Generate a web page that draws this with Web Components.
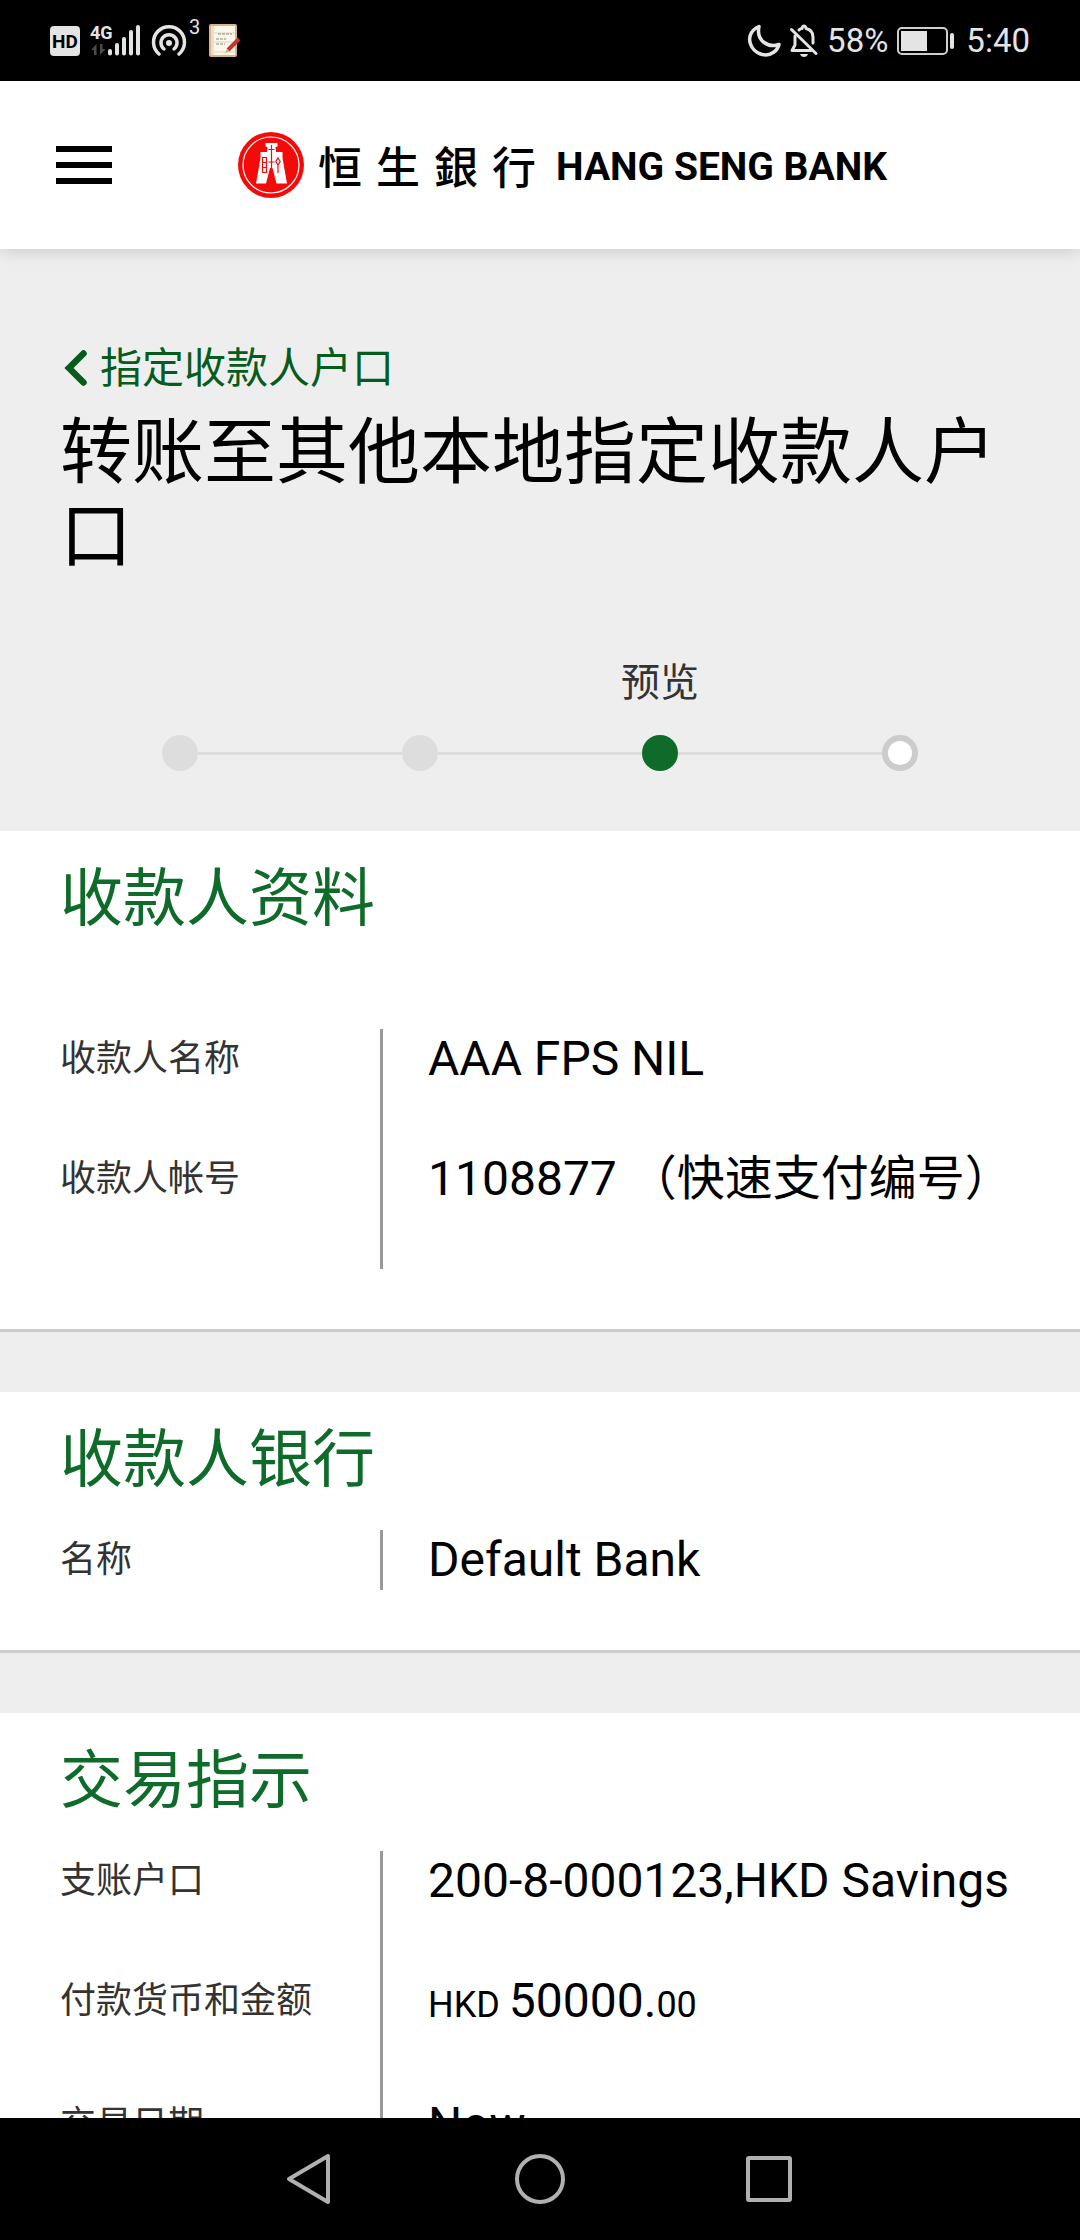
<!DOCTYPE html>
<html lang="zh-CN">
<head>
<meta charset="utf-8">
<meta name="viewport" content="width=device-width, initial-scale=1">
<title>恒生銀行 HANG SENG BANK</title>
<style>
  html, body { margin: 0; height: 100%; }
  body {
    font-family: Roboto, "Noto Sans CJK SC", sans-serif;
    color: #000;
    background: #000;
    --green: #0f6b29;
    --green-dark: #055c1d;
    --surface: #eee;
    --text-soft: #333;
    --gutter: 60px;
  }
</style>
</head>
<body>
<app-screen>
  <status-bar slot="status"></status-bar>
  <bank-header slot="header"></bank-header>
  <page-hero>
    <span slot="back">指定收款人户口</span>
    <span slot="title">转账至其他本地指定收款人户口</span>
    <step-tracker slot="steps">
      <step-item state="done"></step-item>
      <step-item state="done"></step-item>
      <step-item state="current">预览</step-item>
      <step-item state="end"></step-item>
    </step-tracker>
  </page-hero>
  <info-card spaced>
    <span slot="heading">收款人资料</span>
    <detail-row><span slot="label">收款人名称</span>AAA FPS NIL</detail-row>
    <detail-row><span slot="label">收款人帐号</span>1108877 （快速支付编号）</detail-row>
  </info-card>
  <info-card>
    <span slot="heading">收款人银行</span>
    <detail-row last><span slot="label">名称</span>Default Bank</detail-row>
  </info-card>
  <info-card>
    <span slot="heading">交易指示</span>
    <detail-row><span slot="label">支账户口</span>200-8-000123,HKD Savings</detail-row>
    <detail-row><span slot="label">付款货币和金额</span><money-amount currency="HKD" whole="50000" cents="00"></money-amount></detail-row>
    <detail-row><span slot="label">交易日期</span>Now</detail-row>
  </info-card>
  <system-nav slot="nav"></system-nav>
</app-screen>

<script>
  const define = (name, html, setup) => {
    const template = document.createElement('template');
    template.innerHTML = html;
    customElements.define(name, class extends HTMLElement {
      constructor() {
        super();
        this.attachShadow({ mode: 'open' }).append(template.content.cloneNode(true));
      }
      connectedCallback() {
        if (setup) setup(this, this.shadowRoot);
      }
    });
  };

  define('app-screen', `
    <style>
      :host { display: flex; flex-direction: column; height: 100vh; }
      main { flex: 1; min-height: 0; overflow: hidden; background: var(--surface); }
    </style>
    <slot name="status"></slot>
    <slot name="header"></slot>
    <main><slot></slot></main>
    <slot name="nav"></slot>
  `);

  define('status-bar', `
    <style>
      :host {
        display: flex; justify-content: space-between; align-items: center;
        height: 81px; padding: 0 50px; background: #000; color: #e4e4e4;
        font-size: 33px; line-height: 40px;
      }
      .group { display: flex; align-items: center; gap: 9px; }
      svg { display: block; flex: none; overflow: visible; }
      text { font-family: Roboto, sans-serif; }
    </style>
    <div class="group">
      <svg width="30" height="38" viewBox="0 0 30 38">
        <rect y="4" width="30" height="30" rx="4" fill="#e4e4e4"/>
        <text x="15" y="26" font-size="19" font-weight="700" text-anchor="middle" fill="#000">HD</text>
      </svg>
      <svg width="52" height="46" viewBox="0 0 52 46">
        <text x="1" y="21" font-size="18" font-weight="700" fill="#e4e4e4">4G</text>
        <path d="M2 32l5.500-6v11H5v-5zM16.500 31l-5.500 6V26h2.500v5z" fill="#4a4a4a"/>
        <path d="M21 33v2.500M28 27v8.500M35 21v14.500M42 14v21.500M49 9v26.500" stroke="#e4e4e4" stroke-width="4" stroke-linecap="round"/>
      </svg>
      <svg width="50" height="50" viewBox="0 0 50 50">
        <circle cx="19" cy="27" r="3" fill="#e4e4e4"/>
        <g fill="none" stroke="#e4e4e4" stroke-width="3.500" stroke-linecap="round">
          <path d="M14 33a8 8 0 1 1 10 0"/>
          <path d="M9 38a15.500 15.500 0 1 1 20 0"/>
        </g>
        <text x="39" y="18" font-size="20" fill="#e4e4e4">3</text>
      </svg>
      <svg width="31" height="36" viewBox="0 0 31 36">
        <rect x="0" y="1" width="28" height="33" rx="2" fill="#d9b57f"/>
        <rect x="2" y="3" width="24" height="29" fill="#fbf7ea"/>
        <path d="M2 3h3v29H2z" fill="#f0d9cf"/>
        <path d="M5 10h21M5 19h21M5 29h21" stroke="#ddd6c4"/>
        <path d="M9 11h14M7 16h10M7 21h9" stroke="#8e8873" stroke-dasharray="3 1"/>
        <path d="M19 27L30 16" stroke="#c5352e" stroke-width="4"/>
        <path d="M20 28.500l-2-2.500-2 4z" fill="#dba872"/>
      </svg>
    </div>
    <div class="group">
      <svg width="34" height="34" viewBox="0 0 34 34">
        <path d="M12 2.500C4 6 1 13 3.500 20C7 30 19 34 27 28C30 26 31 24 32 20.500C21 24 9 17 12 2.500z" fill="none" stroke="#e4e4e4" stroke-width="3.500" stroke-linejoin="round"/>
      </svg>
      <svg width="28" height="34" viewBox="0 0 28 34">
        <g fill="none" stroke="#e4e4e4" stroke-width="3" stroke-linecap="round" stroke-linejoin="round">
          <path d="M1.500 5.500L26 29.500"/>
          <path d="M5 12v9L2 26.500h19"/>
          <path d="M9 6Q11 4 12 4.500Q12.500 2 14 2Q15.500 2 16 4.500Q23 6 23 13v6"/>
        </g>
        <path d="M10 30h8q-1 3-4 3t-4-3z" fill="#e4e4e4"/>
      </svg>
      <span>58%</span>
      <svg width="60" height="28" viewBox="0 0 60 28">
        <rect x="1" y="1" width="49" height="26" rx="4" fill="none" stroke="#cfcfcf" stroke-width="2"/>
        <rect x="4" y="4" width="26" height="20" fill="#e4e4e4"/>
        <rect x="53" y="6" width="4" height="16" rx="2" fill="#e4e4e4"/>
      </svg>
      <span>5:40</span>
    </div>
  `);

  define('bank-header', `
    <style>
      :host {
        display: flex; align-items: center; gap: 126px; height: 168px; padding: 0 56px;
        background: #fff; position: relative; z-index: 1;
        box-shadow: 0 2px 15px rgba(0, 10, 0, .16);
      }
      button {
        display: flex; flex-direction: column; gap: 10px; width: 56px;
        padding: 0; border: 0; background: none;
      }
      button i { height: 6px; background: #000; }
      a { display: flex; align-items: center; color: #000; text-decoration: none; }
      svg { display: block; flex: none; margin-right: 14px; }
      .zh {
        display: flex; justify-content: space-between; width: 218px; margin-right: 20px;
        font: 500 44px/60px "Noto Sans CJK TC", sans-serif;
      }
      .en { padding-top: 4px; font-size: 39px; line-height: 60px; font-weight: 700; white-space: nowrap; }
    </style>
    <button type="button" aria-label="菜单"><i></i><i></i><i></i></button>
    <a href="#">
      <svg width="66" height="66" viewBox="0 0 66 66" aria-hidden="true">
        <circle cx="33" cy="33" r="33" fill="#f50a0a"/>
        <circle cx="33" cy="33" r="28" fill="none" stroke="#fff" stroke-width="1.200"/>
        <path d="M27.500 11h12v3.500l-2 .5.500 5h6.500v6L49 51.500H38.500L34.500 36h-2.500L28 51.500H18L22.500 26v-6H29l.5-5-2-.5z" fill="#fff"/>
        <g fill="none" stroke="#f50a0a" stroke-width="1.200">
          <path d="M33.500 13v24M30.500 17.500h6M30.500 30h6"/>
          <path d="M24.500 25.500h4v15h-4zM24.500 30.500h4M24.500 35.500h4"/>
          <path d="M40 26l2.200 3.500L40 33l-2.200-3.500zM40 33v8"/>
        </g>
      </svg>
      <span class="zh"><span>恒</span><span>生</span><span>銀</span><span>行</span></span>
      <span class="en">HANG SENG BANK</span>
    </a>
  `);

  define('page-hero', `
    <style>
      :host { display: block; padding: 90px var(--gutter) 60px; background: var(--surface); }
      a {
        display: inline-flex; align-items: center; gap: 12px; padding-left: 4px;
        color: var(--green-dark); font-size: 42px; line-height: 60px; text-decoration: none;
      }
      svg { display: block; flex: none; }
      h1 { margin: 12px 0 80px; font-size: 72px; line-height: 84px; font-weight: 400; }
    </style>
    <a href="#">
      <svg width="24" height="38" viewBox="0 0 24 38" aria-hidden="true">
        <path d="M19.500 3.500L5 18l14.500 14.500" fill="none" stroke="currentColor" stroke-width="6.500" stroke-linecap="round"/>
      </svg>
      <slot name="back"></slot>
    </a>
    <h1><slot name="title"></slot></h1>
    <slot name="steps"></slot>
  `);

  define('step-tracker', `
    <style>
      :host { display: grid; grid-auto-flow: column; grid-auto-columns: 1fr; }
    </style>
    <slot></slot>
  `, host => host.setAttribute('role', 'list'));

  define('step-item', `
    <style>
      :host { display: flex; flex-direction: column; gap: 28px; --track: #ddd; }
      .label {
        height: 48px; font-size: 39px; line-height: 48px; text-align: center;
        color: var(--text-soft);
      }
      .rail { display: flex; align-items: center; }
      .rail i { flex: 1; height: 3px; background: var(--track); }
      .dot { box-sizing: border-box; width: 36px; height: 36px; border-radius: 50%; background: var(--track); }
      :host(:first-child) i:first-child, :host(:last-child) i:last-child { background: none; }
      :host([state="current"]) .dot { background: var(--green); }
      :host([state="end"]) .dot { background: #fff; border: 6px solid #ccc; }
    </style>
    <div class="label"><slot></slot></div>
    <div class="rail"><i></i><span class="dot"></span><i></i></div>
  `, host => host.setAttribute('role', 'listitem'));

  define('info-card', `
    <style>
      :host {
        display: block; margin-bottom: 60px; padding: 32px var(--gutter) 60px;
        background: #fff; border-bottom: 3px solid #ccc;
      }
      h2 { margin: 0 0 34px; color: var(--green); font-size: 63px; line-height: 72px; font-weight: 400; }
      :host([spaced]) h2 { margin-bottom: 94px; }
    </style>
    <h2><slot name="heading"></slot></h2>
    <slot></slot>
  `);

  define('detail-row', `
    <style>
      :host { display: block; }
      dl { display: grid; grid-template-columns: minmax(0, 1fr) minmax(0, 2fr); margin: 0; line-height: 60px; }
      dt { font-size: 36px; color: var(--text-soft); }
      dd { margin: 0; padding: 0 0 60px 45px; border-left: 3px solid #999; font-size: 48px; }
      :host([last]) dd { padding-bottom: 0; }
    </style>
    <dl><dt><slot name="label"></slot></dt><dd><slot></slot></dd></dl>
  `);

  define('money-amount', `
    <style>
      :host { display: inline; }
      small { font-size: 36px; }
    </style>
    <small><span class="currency"></span> </small><span class="whole"></span><small class="cents"></small>
  `, (host, root) => {
    root.querySelector('.currency').textContent = host.getAttribute('currency');
    root.querySelector('.whole').textContent = host.getAttribute('whole') + '.';
    root.querySelector('.cents').textContent = host.getAttribute('cents');
  });

  define('system-nav', `
    <style>
      :host {
        display: flex; justify-content: center; align-items: center; gap: 177px;
        height: 122px; background: #000; color: #b0b0b0;
      }
      button { padding: 0; border: 0; background: none; color: inherit; }
      svg { display: block; }
      path, circle, rect { fill: none; stroke: currentColor; stroke-width: 4; stroke-linejoin: round; }
    </style>
    <button type="button" aria-label="返回"><svg width="52" height="52" viewBox="0 0 52 52"><path d="M43 3v46L4 26z"/></svg></button>
    <button type="button" aria-label="主页"><svg width="52" height="52" viewBox="0 0 52 52"><circle cx="26" cy="26" r="23"/></svg></button>
    <button type="button" aria-label="最近任务"><svg width="52" height="52" viewBox="0 0 52 52"><rect x="5" y="5" width="42" height="42" rx="1"/></svg></button>
  `);
</script>
</body>
</html>
